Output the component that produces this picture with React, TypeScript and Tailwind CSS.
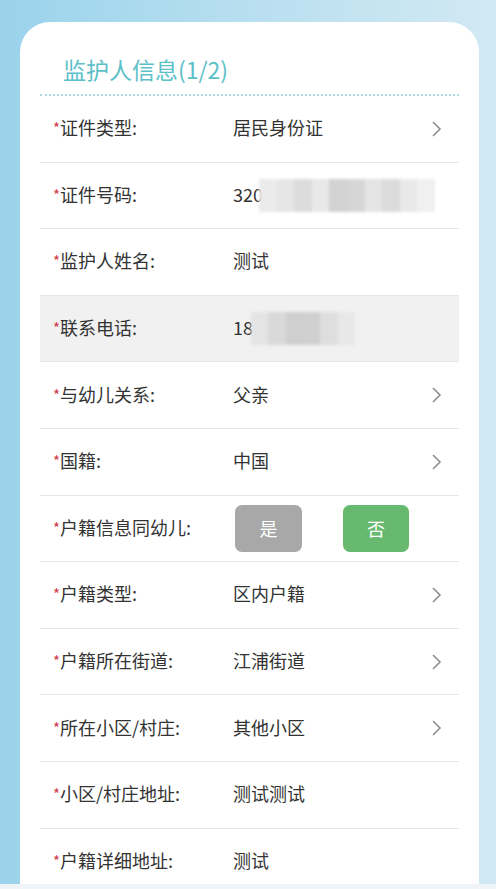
import React from 'react';

type Row = {
  label: string;
  value?: string;
  arrow?: boolean;
  kind?: 'id' | 'phone' | 'toggle';
  shaded?: boolean;
};

const rows: Row[] = [
  { label: '证件类型:', value: '居民身份证', arrow: true },
  { label: '证件号码:', value: '320', kind: 'id' },
  { label: '监护人姓名:', value: '测试' },
  { label: '联系电话:', value: '18', kind: 'phone', shaded: true },
  { label: '与幼儿关系:', value: '父亲', arrow: true },
  { label: '国籍:', value: '中国', arrow: true },
  { label: '户籍信息同幼儿:', kind: 'toggle' },
  { label: '户籍类型:', value: '区内户籍', arrow: true },
  { label: '户籍所在街道:', value: '江浦街道', arrow: true },
  { label: '所在小区/村庄:', value: '其他小区', arrow: true },
  { label: '小区/村庄地址:', value: '测试测试' },
  { label: '户籍详细地址:', value: '测试' },
];

function Chevron() {
  return (
    <svg width="12" height="18" viewBox="0 0 12 18" className="shrink-0 -mr-[2px]">
      <polyline points="2,2 9,9 2,16" fill="none" stroke="#8f8f8f" strokeWidth="1.6" />
    </svg>
  );
}

// pixelated mosaic standing in for the masked number
function Mosaic({ width, cells }: { width: number; cells: string[] }) {
  return (
    <div className="flex h-[33px] blur-[1.5px]" style={{ width }}>
      {cells.map((c, i) => (
        <div key={i} className="flex-1 h-full" style={{ background: c }} />
      ))}
    </div>
  );
}

export default function App() {
  return (
    <div
      className="min-h-[889px] w-full bg-gradient-to-r from-[#9ad3eb] via-[#b8dff0] to-[#d2e9f3] pt-[22px] pl-[20px] pr-[17px] overflow-hidden"
      style={{ fontFamily: '"Microsoft YaHei", "Noto Sans CJK SC", "Noto Sans", sans-serif' }}
    >
      <div className="bg-white rounded-t-[30px] px-[20px] h-[862px] overflow-hidden">
        <div className="h-[74px] flex items-end pb-[13px] pl-[23px] border-b-2 border-dotted border-[#a9dde2]">
          <h1 className="text-[23px] text-[#5cc0c9] leading-none">监护人信息(1/2)</h1>
        </div>

        {rows.map((r, i) => (
          <div
            key={i}
            className={`h-[66.6px] flex items-center pl-[13px] pr-[18px] border-b border-[#e6e6e6] ${
              r.shaded ? 'bg-[#f1f1f1]' : ''
            } ${i === rows.length - 1 ? 'border-b-0' : ''}`}
          >
            <div className="w-[180px] shrink-0 flex items-start text-[18px] text-[#333] -mt-[3px]">
              <span className="text-[#d2394a] text-[15px] leading-none mt-[2px]">*</span>
              <span className="leading-none">{r.label}</span>
            </div>

            {r.kind === 'toggle' ? (
              <div className="flex gap-[41px] ml-[2px]">
                <div className="w-[67px] h-[47px] rounded-[7px] bg-[#a8a8a8] text-white text-[18px] flex items-center justify-center">
                  是
                </div>
                <div className="w-[66px] h-[47px] rounded-[7px] bg-[#66b96e] text-white text-[18px] flex items-center justify-center">
                  否
                </div>
              </div>
            ) : (
              <div className="flex-1 flex items-center text-[18px] text-[#333]">
                <span className="leading-none -mt-[3px]">{r.value}</span>
                {r.kind === 'id' && (
                  <div className="-ml-[4px]">
                    <Mosaic
                      width={176}
                      cells={['#ebebeb', '#e6e6e6', '#dcdcdc', '#e8e8e8', '#d2d2d2', '#d6d6d6', '#e4e4e4', '#dbdbdb', '#e9e9e9', '#f0f0f0']}
                    />
                  </div>
                )}
                {r.kind === 'phone' && (
                  <div className="-ml-[2px]">
                    <Mosaic width={104} cells={['#e4e4e4', '#d9d9d9', '#cfcfcf', '#d0d0d0', '#dedede', '#e8e8e8']} />
                  </div>
                )}
              </div>
            )}

            {r.arrow && <Chevron />}
          </div>
        ))}
      </div>
      <div className="h-[5px] -ml-[20px] -mr-[17px] bg-[#eef4f7]" />
    </div>
  );
}
